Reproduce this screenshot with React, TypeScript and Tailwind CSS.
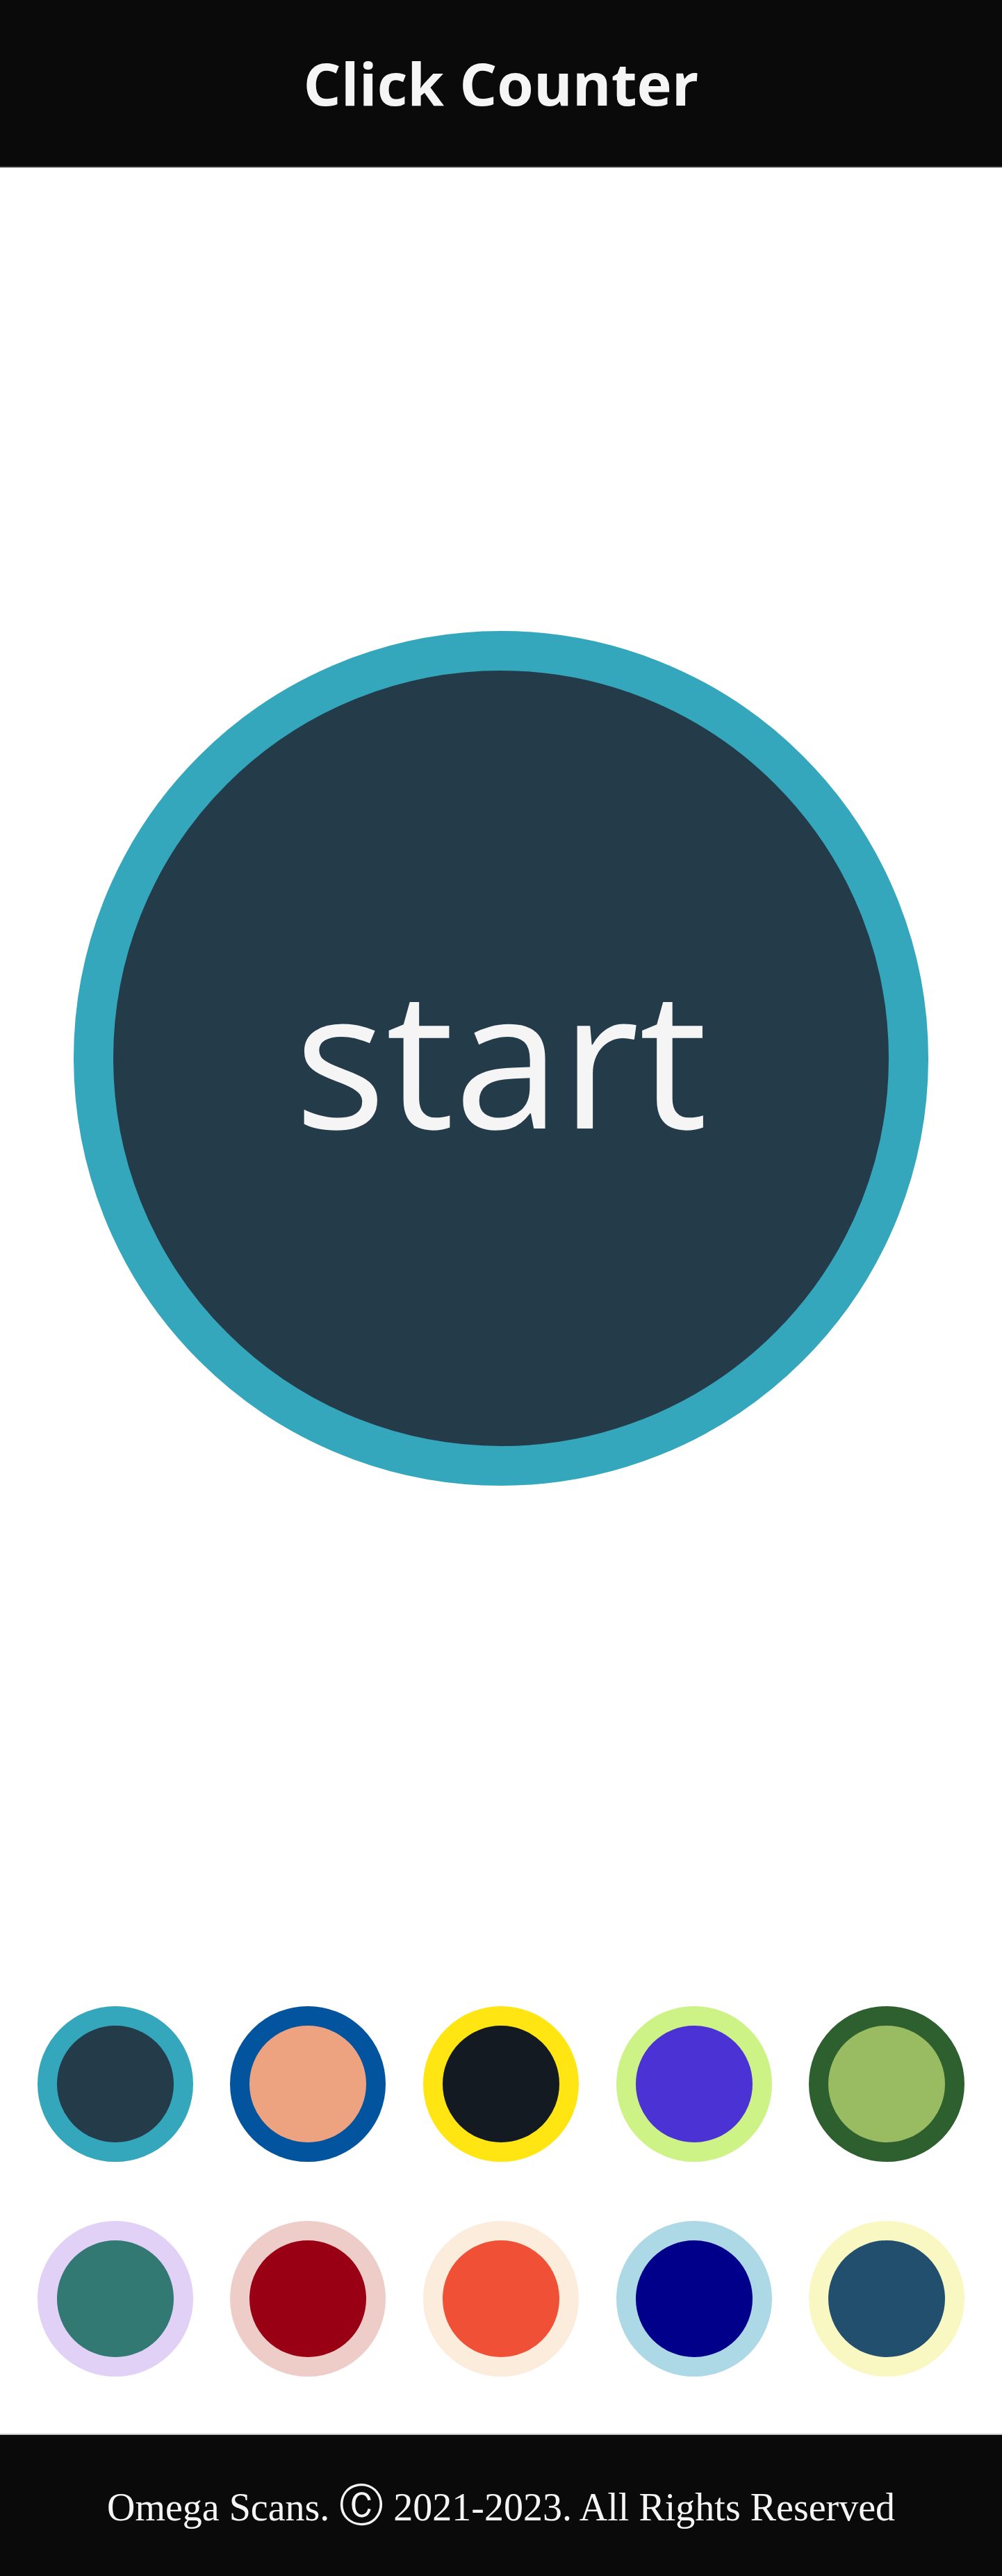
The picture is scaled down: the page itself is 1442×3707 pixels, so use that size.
import React, { useState } from 'react';

interface Theme {
  ring: string;
  fill: string;
}

// each theme keeps the full class names so tailwind picks them up
const THEMES: Theme[] = [
  { ring: 'border-[#35a7bc]', fill: 'bg-[#243b4a]' },
  { ring: 'border-[#03549e]', fill: 'bg-[#eea380]' },
  { ring: 'border-[#ffe612]', fill: 'bg-[#131a21]' },
  { ring: 'border-[#cdf285]', fill: 'bg-[#4a32d4]' },
  { ring: 'border-[#2e5f2e]', fill: 'bg-[#99bb62]' },
  { ring: 'border-[#e1d1f6]', fill: 'bg-[#327873]' },
  { ring: 'border-[#eeccc8]', fill: 'bg-[#990014]' },
  { ring: 'border-[#fcecdb]', fill: 'bg-[#ef5036]' },
  { ring: 'border-[#add8e6]', fill: 'bg-[#00008b]' },
  { ring: 'border-[#faf8c2]', fill: 'bg-[#234f6f]' },
];

const App: React.FC = () => {
  const [theme, setTheme] = useState(0);
  const [count, setCount] = useState<number | null>(null);

  const current = THEMES[theme];

  return (
    <div className="min-h-screen flex flex-col bg-white">
      <header className="h-[241px] flex items-center justify-center bg-[#0a0a0a] border-b-2 border-[#333333]">
        <h1
          className="text-[85px] font-bold text-[#f5f5f5] leading-none"
          style={{ fontFamily: '"Open Sans", sans-serif' }}
        >
          Click Counter
        </h1>
      </header>

      <main className="flex-1 flex flex-col items-center">
        <button
          type="button"
          onClick={() => setCount(c => (c === null ? 0 : c + 1))}
          className={`mt-[667px] w-[1230px] h-[1230px] rounded-full border-[57px] ${current.ring} ${current.fill} flex items-center justify-center cursor-pointer`}
        >
          <span
            className="text-[276px] text-[#f5f5f5] leading-none -translate-y-[6px]"
            style={{ fontFamily: '"Open Sans", sans-serif' }}
          >
            {count === null ? 'start' : count}
          </span>
        </button>

        <div className="mt-[749px] mb-[81px] w-full grid grid-rows-2 gap-y-[85px]">
          {[0, 1].map(row => (
            <div key={row} className="flex justify-evenly">
              {THEMES.slice(row * 5, row * 5 + 5).map((t, i) => (
                <button
                  key={i}
                  type="button"
                  onClick={() => setTheme(row * 5 + i)}
                  className={`w-[224px] h-[224px] rounded-full border-[28px] ${t.ring} ${t.fill} cursor-pointer`}
                />
              ))}
            </div>
          ))}
        </div>
      </main>

      <footer className="h-[205px] flex items-center justify-center bg-[#0a0a0a] border-t-2 border-[#cccccc]">
        <p
          className="text-[56px] text-[#f5f5f5] leading-none"
          style={{ fontFamily: '"Liberation Serif", "DejaVu Sans", serif' }}
        >
          Omega Scans. <span className="text-[64px] leading-none">Ⓒ</span> 2021-2023. All Rights Reserved
        </p>
      </footer>
    </div>
  );
};

export default App;
